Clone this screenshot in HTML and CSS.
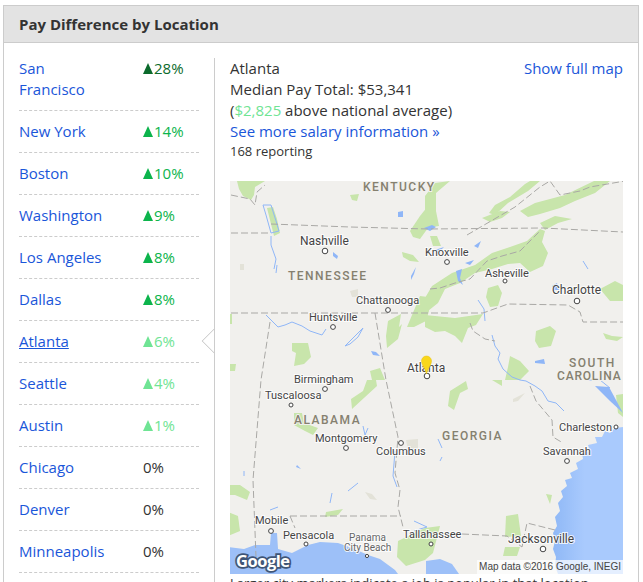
FILE: index.html
```html
<!DOCTYPE html>
<html lang="en">
<head>
<meta charset="utf-8">
<title>Pay Difference by Location</title>
<link rel="stylesheet" href="styles.css">
</head>
<body>
<section class="panel">
  <h2 class="panel-head">Pay Difference by Location</h2>
  <div class="panel-body">
    <ul class="cities">
      <li class="city"><a class="link name" href="#">San Francisco</a><span class="pct up-1"><i class="tri"></i>28%</span></li>
      <li class="city"><a class="link name" href="#">New York</a><span class="pct up-2"><i class="tri"></i>14%</span></li>
      <li class="city"><a class="link name" href="#">Boston</a><span class="pct up-2"><i class="tri"></i>10%</span></li>
      <li class="city"><a class="link name" href="#">Washington</a><span class="pct up-2"><i class="tri"></i>9%</span></li>
      <li class="city"><a class="link name" href="#">Los Angeles</a><span class="pct up-2"><i class="tri"></i>8%</span></li>
      <li class="city"><a class="link name" href="#">Dallas</a><span class="pct up-2"><i class="tri"></i>8%</span></li>
      <li class="city"><a class="link name current" href="#">Atlanta</a><span class="pct up-3"><i class="tri"></i>6%</span></li>
      <li class="city"><a class="link name" href="#">Seattle</a><span class="pct up-3"><i class="tri"></i>4%</span></li>
      <li class="city"><a class="link name" href="#">Austin</a><span class="pct up-3"><i class="tri"></i>1%</span></li>
      <li class="city"><a class="link name" href="#">Chicago</a><span class="pct flat">0%</span></li>
      <li class="city"><a class="link name" href="#">Denver</a><span class="pct flat">0%</span></li>
      <li class="city"><a class="link name" href="#">Minneapolis</a><span class="pct flat">0%</span></li>
    </ul>
    <div class="detail">
      <span class="notch"></span>
      <div class="summary">
        <div>
          <div>Atlanta</div>
          <div>Median Pay Total: $53,341</div>
          <div>(<span class="above">$2,825</span> above national average)</div>
          <div><a class="link" href="#">See more salary information »</a></div>
          <div class="reporting">168 reporting</div>
        </div>
        <a class="link" href="#">Show full map</a>
      </div>
      <div class="map">
        <svg class="map-svg" viewBox="0 0 393 393" width="393" height="393" xmlns="http://www.w3.org/2000/svg">
          <defs>
            <filter id="soft" x="-5%" y="-5%" width="110%" height="110%"><feGaussianBlur stdDeviation="0.5"/></filter>
            <linearGradient id="sea" x1="0" y1="0" x2="1" y2="0"><stop offset="0" stop-color="#8fb8f6"/><stop offset="0.45" stop-color="#a9cafd"/></linearGradient>
          </defs>
          <g filter="url(#soft)">
            <g class="forest">
              <path d="M7 0H35L25 6 24 14 21 19 13 15 9 8Z"/>
              <path d="M120 14L129 13 127 20 122 19Z"/>
              <path d="M37 27L43 26 47 38 50 52 44 55 41 43Z"/>
              <path d="M172 71L183 74 189 81 180 80 173 76Z"/>
              <path d="M62 162H78L81 176 74 183 64 185 66 172 62 170Z"/>
              <path d="M-2 183H6L5 190-2 190Z"/>
              <path d="M0 133H2V143H0Z"/>
              <path d="M158 140L171 133 169 146 172 143 168 158 157 167 156 155Z"/>
              <path d="M177 146L190 115 198 116 199 130 196 140 184 146Z"/>
              <path d="M140 190L150 187 155 199 142 199Z"/>
              <path d="M180 50L190 35 198 25 198 47 190 58 183 56Z"/>
              <path d="M195 15L205 2 220 0 206 12 206 30 209 45 195 47Z"/>
              <path d="M200 55L207 55 211 65 203 65Z"/>
              <path d="M290 30L305 22 335 14 364 0H380L365 12 345 20 330 27 310 33 298 36Z"/>
              <path d="M265 24L280 16 295 3 300 0H310L298 10 278 22 265 34 259 32Z"/>
              <path d="M252 37L270 30 280 31 272 37 260 41Z"/>
              <path d="M310 42L325 35 342 38 328 42 315 49Z"/>
              <path d="M195 117L202 105 222 92 245 84 262 72 280 66 297 60 310 48 315 50 312 61 318 72 313 85 300 91 290 82 278 83 262 88 245 92 230 102 215 108 208 122 198 130Z"/>
              <path d="M258 107L268 104 272 112 268 125 260 126 256 116Z"/>
              <path d="M195 134L225 137 253 133 246 144 238 147 232 162 225 155 215 150 205 151 195 146Z"/>
              <path d="M306 150L320 145 326 150 321 165 309 167 305 160Z"/>
              <path d="M370 108L385 100 393 104 393 120 380 120Z"/>
              <path d="M373 152L382 155 393 156 387 160 376 158Z"/>
              <path d="M280 175L290 180 299 190 290 199 275 199 278 186Z"/>
              <path d="M137 199H146L147 205 122 228 121 218 133 210Z"/>
              <path d="M220 210L236 200 238 208 230 212 224 229 218 225Z"/>
              <path d="M262 199H272L272 205Z"/>
              <path d="M64 232H72L74 242 88 247 83 254 75 250 64 244Z"/>
              <path d="M-2 304H10L20 311 17 319 5 314-2 314Z"/>
              <path d="M-2 331L8 335 10 350-2 355Z"/>
              <path d="M96 331L113 328 108 334 95 336Z"/>
              <path d="M168 360L195 347 210 345 203 372 195 379 176 385 167 376Z"/>
              <path d="M276 335L288 333 291 355 275 356Z"/>
              <path d="M275 366L290 366 287 375 273 375Z"/>
              <path d="M316 313L322 314 320 323Z"/>
              <path d="M386 214L393 213V236L388 232Z"/>
            </g>
            <g class="urban">
              <path d="M10 83L14 83 14 89 10 89Z"/>
              <path d="M120 110L128 108 128 116 122 116Z"/>
              <path d="M176 259L188 258 188 270 178 270Z"/>
              <path d="M135 311L142 313 147 319 140 318Z"/>
              <path d="M283 218L295 212 288 220 283 221Z"/>
            </g>
            <path class="sea" d="M-2 366L14 368 25 364 40 364 41 352 47 352 48 368 62 372 78 364 90 361 108 362 122 367 138 374 150 378 165 389 168 393H-2Z"/>
            <path class="sea" d="M196 380L210 378 222 383 229 393H196Z"/>
            <path class="atlantic" d="M393 246L385 247 380 252 375 250 372 256 365 256 367 262 358 264 360 270 352 272 353 278 346 282 348 288 340 292 342 297 335 299 337 305 331 310 333 316 328 322 330 330 325 336 327 345 323 352 325 360 323 368 326 376 325 385 328 393H393Z"/>
            <g class="lake">
              <path class="river" d="M33 24L41 24 46 40 49 50 41 52 36 34Z"/>
              <path class="river" d="M41 55L41 64 46 78 44 88M47 84L46 92"/>
              <path class="river" d="M36 134L42 140 48 146 55 144 62 141 72 145 80 150 92 154 96 148"/>
              <path class="river" d="M115 165L133 147 128 156 120 163Z"/>
              <path d="M103 71L108 75 107 78 103 75Z"/>
              <path d="M168 31L173 30 173 36 168 36Z"/>
              <path d="M181 95L186 86 184 93 181 99Z"/>
              <path d="M194 47L202 44 206 46 200 50Z"/>
              <path d="M205 69L214 66 208 72Z"/>
              <path d="M226 90L232 88 230 97 233 104 228 100Z"/>
              <path d="M235 82L244 79 240 84Z"/>
              <path d="M244 65L251 60 248 67Z"/>
              <path d="M141 170L146 171 150 175 143 174Z"/>
              <path d="M322 105L327 102 329 109 324 109Z"/>
              <path class="river" d="M353 80L358 88"/>
              <path class="river" d="M248 119L254 128 255 140"/>
              <path class="river" d="M262 154L265 165 270 172 268 178 273 188 282 196 290 199"/>
              <path d="M305 180L314 178 315 183 305 182Z"/>
              <path class="river" d="M290 199L296 200 305 205 312 210 318 220 326 222 334 230"/>
              <path d="M365 205L379 206 393 232 380 220Z"/>
              <path class="river" d="M357 199L370 199 380 207"/>
              <path class="river" d="M208 258L212 267M212 276L210 280"/>
              <path class="river" d="M165 270L163 295 167 306"/>
              <path class="river" d="M133 245L135 254 138 247"/>
              <path class="river" d="M128 302L118 310M102 312L100 322"/>
              <path d="M67 284L71 288 66 286Z"/>
              <path class="river" d="M184 340L197 346 190 348 184 350"/>
              <path class="river" d="M14 295L14 290M40 329L48 326"/>
            </g>
            <g class="borders">
              <path d="M1 52H41M41 43L120 46 198 48 313 47 393 51"/>
              <path d="M1 132H253L278 123 338 124 350 131 353 141H393"/>
              <path d="M40 141L31 199 23 299 26 376"/>
              <path d="M145 132L156 199 168 256 165 292 170 309 168 326 173 346"/>
              <path d="M60 335H171M60 335L65 347"/>
              <path d="M232 353L277 355 292 366 297 342 325 349"/>
              <path d="M1 14L20 18 25 24 27 11 35 4"/>
              <path d="M237 54L285 26 310 6 320 0 330 14 350 10 360 6 395 0"/>
              <path d="M200 108L210 107 225 102 240 98 257 80 272 75 290 70 310 50"/>
              <path d="M240 142L243 150 255 158 265 160"/>
              <path d="M300 205L306 220 322 239 323 256 333 262"/>
            </g>
          </g>

          <g class="state">
            <text x="133" y="10">KENTUCKY</text>
            <text x="58" y="99">TENNESSEE</text>
            <text x="64" y="243">ALABAMA</text>
            <text x="212" y="259">GEORGIA</text>
            <text x="339" y="186">SOUTH</text>
            <text class="tight" x="327" y="199">CAROLINA</text>
          </g>
          <g class="marks">
            <circle cx="95" cy="70" r="2.8"/><circle cx="158" cy="129" r="2.4"/><circle cx="103" cy="146" r="2.4"/>
            <circle cx="95" cy="208" r="2.4"/><circle cx="61" cy="224" r="2"/><circle cx="116" cy="267" r="2.4"/>
            <circle cx="171" cy="262" r="2.4"/><circle cx="41" cy="350" r="2.4"/><circle cx="76" cy="363" r="2"/>
            <circle cx="137" cy="375" r="1.6"/><circle cx="201" cy="363" r="2"/><circle cx="313" cy="368" r="2.8"/>
            <circle cx="337" cy="280" r="2.4"/><circle cx="386" cy="246" r="2"/><circle cx="197" cy="195" r="2.8"/>
            <circle cx="347" cy="120" r="2.8"/><circle cx="275" cy="100" r="2"/><circle cx="217" cy="81" r="2.4"/>
          </g>
          <g class="place">
            <text class="lg" x="70" y="64">Nashville</text>
            <text x="126" y="123">Chattanooga</text>
            <text x="79" y="140">Huntsville</text>
            <text x="64" y="202">Birmingham</text>
            <text x="35" y="218">Tuscaloosa</text>
            <text x="85" y="261">Montgomery</text>
            <text x="146" y="274">Columbus</text>
            <text x="25" y="343">Mobile</text>
            <text x="53" y="358">Pensacola</text>
            <text class="sm" x="119" y="360">Panama</text>
            <text class="sm" x="114" y="370">City Beach</text>
            <text x="173" y="357">Tallahassee</text>
            <text class="lg" x="278" y="362">Jacksonville</text>
            <text x="313" y="274">Savannah</text>
            <text x="329" y="250">Charleston</text>
            <text class="lg" x="177" y="191">Atlanta</text>
            <text class="lg" x="322" y="113">Charlotte</text>
            <text x="255" y="96">Asheville</text>
            <text x="195" y="75">Knoxville</text>
          </g>
          <path class="pin" d="M196.500 193C195.500 188 191.500 184 191.500 180A5 5 0 0 1 201.500 180C201.500 184 197.500 188 196.500 193Z"/>
          <text class="google" x="6" y="386">Google</text>
        </svg>
        <div class="attribution">Map data ©2016 Google, INEGI</div>
      </div>
      <p class="note">Larger city markers indicate a job is popular in that location.</p>
    </div>
  </div>
</section>
</body>
</html>
```
FILE: styles.css
```css
* { box-sizing: border-box; }
html, body { margin: 0; height: 582px; overflow: hidden; background: #fff; }
body {
  padding: 5px 4px 0 3px;
  font-family: "Open Sans", "Liberation Sans", sans-serif;
  font-size: 15px;
  line-height: 21px;
  color: #333;
}
.panel { border: 1px solid #ccc; height: 700px; }
.panel-head {
  margin: 0;
  height: 37px;
  padding-left: 15px;
  background: #e3e3e3;
  border-bottom: 1px solid #ccc;
  font-size: 15px;
  font-weight: 700;
  line-height: 37px;
  color: #333;
}
.panel-body { display: flex; padding: 15px 15px 0; }
.cities { list-style: none; margin: 0; padding: 0; width: 180px; flex: none; }
.city {
  display: flex;
  justify-content: space-between;
  padding-bottom: 10px;
  margin-bottom: 10px;
  border-bottom: 1px dashed #ccc;
}
.name { width: 124px; padding-right: 32px; display: block; }
.link { color: #1a56d9; text-decoration: none; }
.current { text-decoration: underline; }
.pct { display: flex; align-items: center; align-self: flex-start; height: 21px; width: 56px; }
.tri {
  width: 0; height: 0; margin-right: 1px;
  border-left: 5.500px solid transparent;
  border-right: 5.500px solid transparent;
  border-bottom: 11px solid currentColor;
}
.up-1 { color: #0b6a2c; }
.up-2 { color: #0cb44c; }
.up-3 { color: #6fe494; }
.flat { color: #333; margin-left: -2px; }
.detail {
  position: relative;
  margin-left: 15px;
  padding-left: 15px;
  width: 409px;
  border-left: 1px solid #ccc;
}
.notch {
  position: absolute;
  left: -10px;
  top: 274px;
  width: 18px;
  height: 18px;
  background: #fff;
  border-left: 1px solid #ccc;
  border-bottom: 1px solid #ccc;
  transform: rotate(45deg);
  clip-path: polygon(0 0, 100% 100%, 0 100%);
}
.summary { display: flex; justify-content: space-between; height: 123px; }
.above { color: #6fe494; }
.reporting { font-size: 13px; line-height: 19px; }
.map { position: relative; width: 393px; height: 393px; background: #f1f0ed; overflow: hidden; }
.map-svg { display: block; }
.forest path { fill: #c8e5ab; }
.urban path { fill: #e3e2d8; }
.sea { fill: #9dc0f8; }
.atlantic { fill: url(#sea); }
.lake path { fill: #8fb6f7; }
.lake .river { fill: none; stroke: #8fb6f7; stroke-width: 1; }
.borders path { fill: none; stroke: #a9a8a5; stroke-width: 1; stroke-dasharray: 7 3; }
.state text {
  font-family: Roboto, "Open Sans", sans-serif;
  font-size: 12px;
  font-weight: 500;
  letter-spacing: 1.500px;
  fill: #85806f;
  paint-order: stroke;
  stroke: #f1f0ed;
  stroke-width: 2px;
}
.state .tight { letter-spacing: .8px; }
.place text {
  font-family: Roboto, "Open Sans", sans-serif;
  font-size: 11px;
  fill: #444;
  paint-order: stroke;
  stroke: #fff;
  stroke-width: 2px;
  stroke-opacity: .8;
}
.place .lg { font-size: 12px; }
.place .sm { font-size: 10px; fill: #666; }
.marks circle { fill: #fff; stroke: #444; stroke-width: 1; }
.pin { fill: #f9d71c; stroke: #e6bf10; stroke-width: .5; }
.google {
  font-family: "Open Sans", sans-serif;
  font-size: 16.500px;
  font-weight: 700;
  letter-spacing: -.5px;
  fill: #fff;
  paint-order: stroke;
  stroke: #3f5577;
  stroke-width: 3.500px;
}
.attribution {
  position: absolute;
  right: 0;
  bottom: 0;
  height: 14px;
  padding: 0 2px;
  background: rgba(255, 255, 255, .7);
  font-family: "Liberation Sans", sans-serif;
  font-size: 10px;
  line-height: 14px;
  color: #444;
}
.note { margin: 0; font-size: 13px; line-height: 19px; white-space: nowrap; }
```
